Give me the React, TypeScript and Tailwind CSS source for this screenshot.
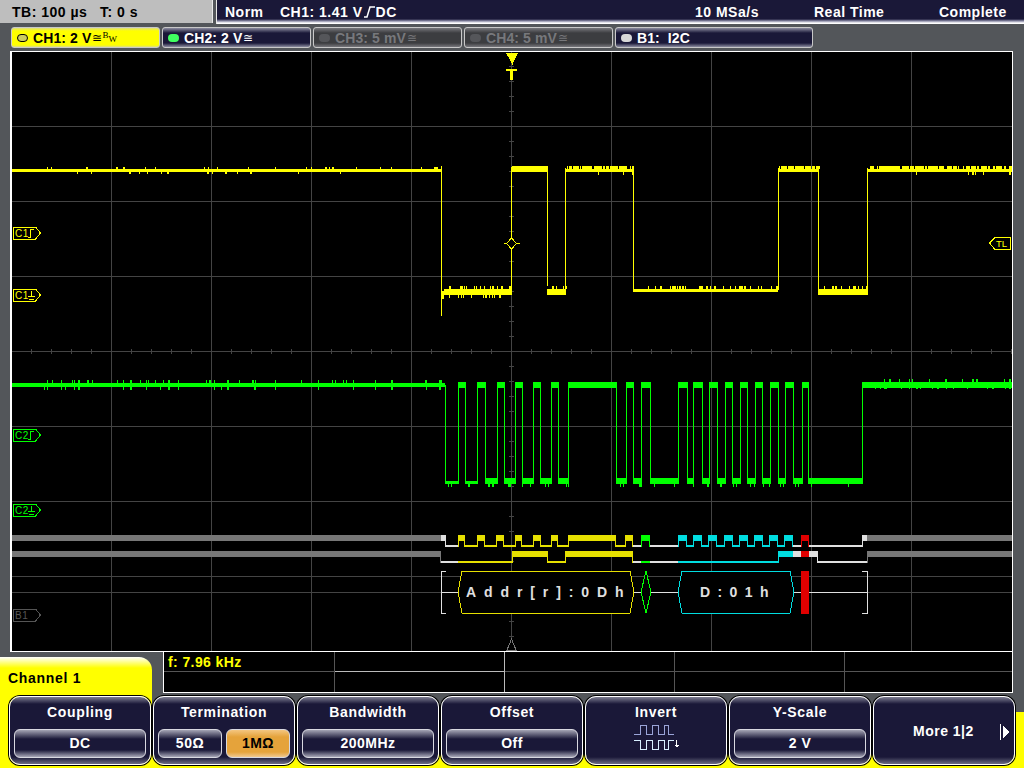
import React from "react";

const Y = "#ffff00";
const DY = "#e6e000";
const G = "#00ff00";
const W = "#e0e0e0";
const C = "#00dde0";
const GR = "#777777";
const RD = "#e00000";
const GRID = "#444444";

function rnd(n: number) {
  const v = Math.sin(n * 127.1 + 11.7) * 43758.5453;
  return v - Math.floor(v);
}

function R({ x, y, w, h, f }: { x: number; y: number; w: number; h: number; f: string }) {
  return <rect x={x} y={y} width={w} height={h} fill={f} />;
}

function Noise({ x0, x1, top, bot, n, seed, f }: { x0: number; x1: number; top: number; bot: number; n: number; seed: number; f: string }) {
  const items = [];
  for (let i = 0; i < n; i++) {
    const x = Math.round(x0 + rnd(seed + i) * (x1 - x0));
    items.push(<rect key={i} x={x} y={top} width={rnd(seed + i + 0.5) > 0.8 ? 2 : 1} height={bot - top} fill={f} />);
  }
  return <>{items}</>;
}

const ch2Edges = [445, 458, 465, 477, 485, 497, 504, 515, 522, 533, 540, 551, 558, 568, 616, 626, 633, 641, 650, 678, 687, 693, 702, 709, 717, 725, 732, 740, 747, 755, 762, 770, 778, 785, 793, 802, 808, 862];

type Seg = [number, number, number, string];
const track1: Seg[] = [
  [12, 441, 1, GR], [441, 446, 1, W], [446, 458, 0, W],
  [458, 465, 1, DY], [465, 477, 0, DY], [477, 485, 1, DY], [485, 496, 0, DY], [496, 504, 1, DY], [504, 515, 0, DY],
  [515, 522, 1, DY], [522, 533, 0, DY], [533, 541, 1, DY], [541, 551, 0, DY], [551, 558, 1, DY], [558, 568, 0, DY],
  [568, 616, 1, DY], [616, 625, 0, DY], [625, 633, 1, DY], [633, 641, 0, W], [641, 650, 1, G], [650, 678, 0, W],
  [678, 687, 1, C], [687, 693, 0, C], [693, 702, 1, C], [702, 708, 0, C], [708, 717, 1, C], [717, 724, 0, C],
  [724, 733, 1, C], [733, 739, 0, C], [739, 748, 1, C], [748, 754, 0, C], [754, 763, 1, C], [763, 769, 0, C],
  [769, 778, 1, C], [778, 784, 0, C], [784, 793, 1, C], [793, 801, 0, W], [801, 809, 1, RD], [809, 862, 0, W],
  [862, 867, 1, W], [867, 1012, 1, GR],
];
const track2: Seg[] = [
  [12, 441, 1, GR], [441, 458, 0, W], [458, 512, 0, DY], [512, 548, 1, DY], [548, 565, 0, DY], [565, 633, 1, DY],
  [633, 641, 0, W], [641, 650, 0, G], [650, 678, 0, W], [678, 778, 0, C], [778, 793, 1, C], [793, 801, 1, W],
  [801, 809, 1, RD], [809, 818, 1, W], [818, 867, 0, W], [867, 1012, 1, GR],
];

function Track({ segs, y }: { segs: Seg[]; y: number }) {
  return (
    <>
      {segs.map(([a, b, hi, c], i) => {
        const prevLow = i > 0 && !segs[i - 1][2];
        const nextLow = i < segs.length - 1 && !segs[i + 1][2];
        return hi ? (
          <g key={i}>
            <R x={a} y={y} w={b - a} h={6} f={c} />
            {prevLow && <R x={a} y={y} w={1} h={12} f={c} />}
            {nextLow && <R x={b - 1} y={y} w={1} h={12} f={c} />}
          </g>
        ) : (
          <R key={i} x={a} y={y + 10} w={b - a} h={2} f={c} />
        );
      })}
    </>
  );
}

function frame(x0: number, x1: number) {
  return `${x0},592 ${x0 + 4},571 ${x1 - 4},571 ${x1},592 ${x1 - 4},613 ${x0 + 4},613`;
}

function Marker({ y, label, c, kind }: { y: number; label: string; c: string; kind: "edge" | "gnd" | "none" }) {
  return (
    <g>
      <polygon points={`13.5,${y - 6} 35.5,${y - 6} 40.5,${y} 35.5,${y + 6} 13.5,${y + 6}`} fill="#000" stroke={c} strokeWidth="1" />
      <text x="15" y={y + 4} fontSize="10" fontWeight="400" fill={c} letterSpacing="0.5" style={{ fontFamily: "'Liberation Sans', sans-serif" }}>
        {label}
      </text>
      {kind === "edge" && <path d={`M28 ${y + 4.5}H30.5V${y - 3.5}H33.5`} fill="none" stroke={c} strokeWidth="1" />}
      {kind === "gnd" && <path d={`M31.5 ${y - 4}V${y + 1}M28 ${y + 1.5}H35M29 ${y + 4.5}H34`} fill="none" stroke={c} strokeWidth="1" />}
    </g>
  );
}

function Scope() {
  const vGrid = [111, 211, 311, 411, 511, 611, 711, 811, 911];
  const hGrid = [126, 201, 276, 351, 426, 501, 576];
  const vTicks: number[] = [];
  for (let y = 66; y < 650; y += 15) vTicks.push(y);
  const hTicks: number[] = [];
  for (let x = 31; x < 1012; x += 20) hTicks.push(x);
  const segs: React.ReactNode[] = [];
  ch2Edges.forEach((x, i) => {
    const next = ch2Edges[i + 1] ?? 1012;
    const low = i % 2 === 0;
    segs.push(<R key={"e" + i} x={x} y={385} w={1} h={97} f={G} />);
    if (low) {
      const top = i < 4 ? 481 : 478;
      segs.push(<R key={"s" + i} x={x} y={top} w={next - x + 1} h={484 - top} f={G} />);
      segs.push(<Noise key={"d" + i} x0={x} x1={next} top={484} bot={487} n={2} seed={i * 17 + 5} f={G} />);
    } else {
      segs.push(<R key={"s" + i} x={x} y={382} w={next - x + 1} h={6} f={G} />);
    }
  });
  return (
    <svg viewBox="12 52 1000 599" className="block w-full h-full" shapeRendering="crispEdges">
      {vGrid.map((x) => <R key={x} x={x} y={52} w={1} h={599} f={GRID} />)}
      {hGrid.map((y) => <R key={y} x={12} y={y} w={1000} h={1} f={GRID} />)}
      {vTicks.map((y) => <R key={y} x={509} y={y} w={5} h={1} f={GRID} />)}
      {hTicks.map((x) => <R key={x} x={x} y={349} w={1} h={5} f={GRID} />)}
      <R x={12} y={592} w={429} h={1} f={GRID} />
      <R x={867} y={592} w={145} h={1} f={GRID} />

      {/* CH1 */}
      <g>
        <R x={12} y={169} w={429} h={3} f={Y} />
        <Noise x0={12} x1={441} top={167} bot={169} n={26} seed={1} f={Y} />
        <Noise x0={12} x1={441} top={172} bot={174} n={14} seed={31} f={Y} />
        <R x={441} y={166} w={1} h={150} f={Y} />
        <R x={442} y={291} w={2} h={8} f={Y} />
        <R x={444} y={289} w={68} h={6} f={Y} />
        <Noise x0={444} x1={510} top={286} bot={289} n={22} seed={2} f={Y} />
        <Noise x0={444} x1={500} top={295} bot={298} n={14} seed={3} f={Y} />
        <R x={511} y={167} w={1} h={128} f={Y} />
        <R x={512} y={166} w={36} h={6} f={Y} />
        <R x={547} y={168} w={1} h={118} f={Y} />
        <R x={547} y={289} w={19} h={6} f={Y} />
        <Noise x0={548} x1={565} top={286} bot={289} n={7} seed={4} f={Y} />
        <R x={565} y={168} w={1} h={125} f={Y} />
        <R x={565} y={169} w={69} h={3} f={Y} />
        <Noise x0={565} x1={633} top={166} bot={169} n={90} seed={5} f={Y} />
        <Noise x0={565} x1={633} top={172} bot={175} n={3} seed={6} f={Y} />
        <R x={633} y={168} w={1} h={122} f={Y} />
        <R x={633} y={289} w={145} h={3} f={Y} />
        <Noise x0={635} x1={778} top={286} bot={289} n={36} seed={7} f={Y} />
        <R x={778} y={168} w={1} h={122} f={Y} />
        <R x={778} y={169} w={41} h={3} f={Y} />
        <Noise x0={778} x1={818} top={166} bot={169} n={70} seed={8} f={Y} />
        <R x={818} y={168} w={1} h={124} f={Y} />
        <R x={818} y={289} w={50} h={6} f={Y} />
        <Noise x0={820} x1={867} top={286} bot={289} n={12} seed={9} f={Y} />
        <R x={867} y={168} w={1} h={125} f={Y} />
        <R x={867} y={169} w={145} h={3} f={Y} />
        <Noise x0={868} x1={1011} top={166} bot={169} n={170} seed={10} f={Y} />
        <Noise x0={868} x1={1011} top={172} bot={175} n={6} seed={11} f={Y} />
      </g>

      {/* CH2 */}
      <g>
        <R x={12} y={383} w={433} h={4} f={G} />
        <Noise x0={12} x1={445} top={380} bot={383} n={40} seed={20} f={G} />
        <Noise x0={12} x1={445} top={387} bot={390} n={25} seed={40} f={G} />
        {segs}
        <R x={862} y={382} w={150} h={5} f={G} />
        <Noise x0={863} x1={1011} top={379} bot={382} n={14} seed={21} f={G} />
        <Noise x0={863} x1={1011} top={387} bot={389} n={18} seed={41} f={G} />
      </g>

      {/* Bus */}
      <Track segs={track1} y={535} />
      <Track segs={track2} y={551} />
      <path d="M446 571.5H441.5V613.5H446M862 571.5H867.5V613.5H862" fill="none" stroke={W} strokeWidth="1" />
      <R x={441} y={592} w={17} h={1} f={W} />
      <R x={634} y={592} w={7} h={1} f={W} />
      <R x={651} y={592} w={27} h={1} f={W} />
      <R x={794} y={592} w={7} h={1} f={W} />
      <R x={809} y={592} w={58} h={1} f={W} />
      <polygon points={frame(458, 634)} fill="#000" stroke={DY} strokeWidth="1" />
      <polygon points="641,592 646,571 651,592 646,613" fill="#000" stroke={G} strokeWidth="1" />
      <polygon points={frame(678, 794)} fill="#000" stroke={C} strokeWidth="1" />
      <R x={801} y={571} w={8} h={43} f={RD} />
      <text x="466" y="597" fontSize="14" fontWeight="700" fill={W} letterSpacing="7.9" style={{ fontFamily: "'Liberation Sans', sans-serif" }}>Addr[r]:0Dh</text>
      <text x="700" y="597" fontSize="14" fontWeight="700" fill={W} letterSpacing="7.4" style={{ fontFamily: "'Liberation Sans', sans-serif" }}>D:01h</text>

      {/* Markers */}
      <polygon points="506,53 518,53 514,61 512.5,65 510.5,61" fill={Y} />
      <path d="M506 69H517V71H513V80H510V71H506Z" fill={Y} />
      <polygon points="511.5,639 516,650 507,650" fill="#000" stroke="#777" strokeWidth="1" />
      <path d="M511.5 238L516.5 243.5L511.5 249L506.5 243.5Z" fill="#000" stroke={Y} strokeWidth="1" />
      <R x={504} y={243} w={3} h={1} f={Y} />
      <R x={517} y={243} w={3} h={1} f={Y} />
      <R x={511} y={167} w={1} h={71} f={Y} />
      <Marker y={233} label="C1" c={Y} kind="edge" />
      <Marker y={295} label="C1" c={Y} kind="gnd" />
      <Marker y={435} label="C2" c={G} kind="edge" />
      <Marker y={510} label="C2" c={G} kind="gnd" />
      <Marker y={615} label="B1" c="#555555" kind="none" />
      <polygon points="989.5,243 995,237.5 1010.5,237.5 1010.5,249.5 995,249.5" fill="#000" stroke={Y} strokeWidth="1" />
      <text x="996" y="247" fontSize="9.5" fill={Y} style={{ fontFamily: "'Liberation Sans', sans-serif" }}>TL</text>
    </svg>
  );
}

function Tab({ w, label, suffix, led, tone }: { w: string; label: string; suffix?: React.ReactNode; led: string; tone: "y" | "n" | "g" }) {
  const cls =
    tone === "y"
      ? "bg-[linear-gradient(#dddd80_0,#ffff00_3px,#ffff00_17px,#dddd80_100%)] text-black"
      : tone === "n"
        ? "bg-[linear-gradient(#8c8ca0_0,#1a1838_5px,#1a1838_15px,#8c8ca0_100%)] text-white"
        : "bg-[linear-gradient(#77777c_0,#3c3d40_5px,#3c3d40_15px,#77777c_100%)] text-[#77787c]";
  return (
    <div className={`${w} ${cls} h-[21px] flex items-center rounded-[3px] border border-[#c8c8c8] pl-[5px] text-[14px] font-bold leading-none whitespace-pre tracking-[0.1px]`}>
      <span className={`${led} w-[11px] h-[8px] rounded-full mr-[5px] shrink-0`} />
      {label}
      {suffix}
    </div>
  );
}

const Approx = ({ c }: { c: string }) => <span className={`${c} text-[12px] font-normal ml-[1px]`}>≅</span>;

function Pill({ children, w, active }: { children: React.ReactNode; w: string; active?: boolean }) {
  return (
    <div
      className={`${w} h-[29px] rounded-[6px] border border-[#d8d8e0] flex items-center justify-center text-[14px] font-bold tracking-[0.5px] ${
        active
          ? "bg-[linear-gradient(#f4c680_0,#e5a33b_7px,#e5a33b_22px,#f0c890_100%)] text-black"
          : "bg-[linear-gradient(#a5a5b5_0,#1a1838_9px,#1a1838_20px,#a8a8b8_100%)] text-white"
      }`}
    >
      {children}
    </div>
  );
}

function Softkey({ title, children }: { title?: string; children: React.ReactNode }) {
  return (
    <div className="w-[142px] h-[69px] rounded-[11px] border border-white shadow-[0_0_0_1px_#000] bg-[linear-gradient(#7e7e92_0,#1a1838_7px,#1a1838_60px,#6e6e84_100%)] flex flex-col items-center text-white overflow-hidden">
      {title && <div className="h-[32px] pt-[6px] text-[14px] leading-[18px] font-bold tracking-[0.65px]">{title}</div>}
      {children}
    </div>
  );
}

export default function App() {
  return (
    <div className="w-[1024px] h-[768px] overflow-hidden bg-[#53565a] font-['Liberation_Sans',sans-serif] flex flex-col">
      <header className="h-[24px] flex shrink-0 text-[14px] font-bold leading-none tracking-[0.5px] whitespace-pre">
        <div className="w-[213px] h-[23px] bg-[#bebebe] border-r border-[#e8e8e8] flex items-center pl-[12px] text-black">
          <span className="w-[88px]">TB: 100 µs</span>
          <span>T: 0 s</span>
        </div>
        <div className="ml-[3px] flex-1 h-[24px] flex items-center pl-[8px] pb-[1px] text-white border-l border-[#e8e8e8] bg-[linear-gradient(#1a1838_0,#1a1838_19px,#8c8ca8_21px,#ffffff_23px)]">
          <span className="w-[55px]">Norm</span>
          <span className="w-[415px] flex items-center">
            CH1: 1.41 V
            <svg width="11" height="12" viewBox="0 0 11 12" fill="none" stroke="#fff" strokeWidth="1.5" className="mx-[1px]">
              <path d="M0 11H3L6 1H11" />
            </svg>
            DC
          </span>
          <span className="w-[119px]">10 MSa/s</span>
          <span className="w-[125px]">Real Time</span>
          <span>Complete</span>
        </div>
      </header>

      <nav className="h-[21px] mt-[3px] ml-[11px] flex gap-[2px] shrink-0">
        <Tab w="w-[149px]" label="CH1: 2 V" tone="y" led="border border-black bg-[#cccc60]" suffix={<><Approx c="text-black" /><span className="text-[9px] font-normal font-['Liberation_Serif',serif] self-start mt-[3px]">B</span><span className="text-[9px] font-normal font-['Liberation_Serif',serif] self-end mb-[3px]">W</span></>} />
        <Tab w="w-[149px]" label="CH2: 2 V" tone="n" led="bg-[#40ff60]" suffix={<Approx c="text-white" />} />
        <Tab w="w-[149px]" label="CH3: 5 mV" tone="g" led="bg-[#55565a]" suffix={<Approx c="text-[#77787c]" />} />
        <Tab w="w-[149px]" label="CH4: 5 mV" tone="g" led="bg-[#55565a]" suffix={<Approx c="text-[#77787c]" />} />
        <Tab w="w-[198px]" label="B1:  I2C" tone="n" led="bg-[#d8d8d8]" />
      </nav>

      <main className="mt-[3px] ml-[10px] w-[1003px] h-[601px] shrink-0 bg-black border-y border-r border-l-2 border-white">
        <Scope />
      </main>

      <section className="flex-1 bg-[linear-gradient(#53565a_60px,#ffff00_60px)]">
        <div className="flex h-[44px]">
          <div className="w-[152px] h-[55px] mt-[5px] rounded-tr-[13px] bg-[linear-gradient(#ffffff_0,#ffff00_11px)] pl-[8px] pt-[12px] text-[14px] leading-[18px] font-bold tracking-[0.7px] text-black">
            Channel 1
          </div>
          <div className="ml-[11px] w-[850px] h-[41px] bg-black border-x border-b border-white grid grid-cols-[171px_170px_170px_170px_1fr] grid-rows-2">
            <div className="border-r border-b border-[#555] pl-[4px] text-[14px] leading-[20px] font-bold tracking-[0.4px] text-[#ffff00]">f: 7.96 kHz</div>
            <div className="border-r border-b border-[#bbb]" />
            <div className="border-r border-b border-[#555]" />
            <div className="border-r border-b border-[#555]" />
            <div className="border-b border-[#555]" />
            <div className="border-r border-[#555]" />
            <div className="border-r border-[#bbb]" />
            <div className="border-r border-[#555]" />
            <div className="border-r border-[#555]" />
            <div />
          </div>
        </div>
        <div className="relative ml-[9px] flex gap-[2px]">
          <Softkey title="Coupling"><Pill w="w-[132px]">DC</Pill></Softkey>
          <Softkey title="Termination">
            <div className="flex gap-[4px]">
              <Pill w="w-[64px]">50Ω</Pill>
              <Pill w="w-[64px]" active>1MΩ</Pill>
            </div>
          </Softkey>
          <Softkey title="Bandwidth"><Pill w="w-[132px]">200MHz</Pill></Softkey>
          <Softkey title="Offset"><Pill w="w-[132px]">Off</Pill></Softkey>
          <Softkey title="Invert">
            <svg width="46" height="26" viewBox="0 0 46 26" fill="none" strokeWidth="1" shapeRendering="crispEdges" className="-mt-[4px]">
              <path d="M0.5 9.5H7.5V0.5H13.5V9.5H19.5V0.5H25.5V9.5H31.5V0.5H35.5V9.5H40.5" stroke="#9aa4d8" />
              <path d="M0.5 15.5H7.5V24.5H13.5V15.5H19.5V24.5H25.5V15.5H31.5V24.5H35.5V15.5H40.5" stroke="#d8f0ff" />
              <path d="M43.5 15V22M41.5 20.5H45.5M42.5 21.5H44.5" stroke="#ffffff" />
            </svg>
          </Softkey>
          <Softkey title="Y-Scale"><Pill w="w-[132px]">2 V</Pill></Softkey>
          <Softkey>
            <div className="w-full h-full flex items-center pl-[39px] pt-[2px] text-[14px] font-bold tracking-[0.5px]">
              More 1|2
              <svg width="10" height="16" viewBox="0 0 10 16" className="ml-[26px]" shapeRendering="crispEdges">
                <rect x="0" y="0" width="1" height="16" fill="#fff" />
                <polygon points="3,1 9,8 3,15" fill="#fff" />
              </svg>
            </div>
          </Softkey>
        </div>
      </section>
    </div>
  );
}
